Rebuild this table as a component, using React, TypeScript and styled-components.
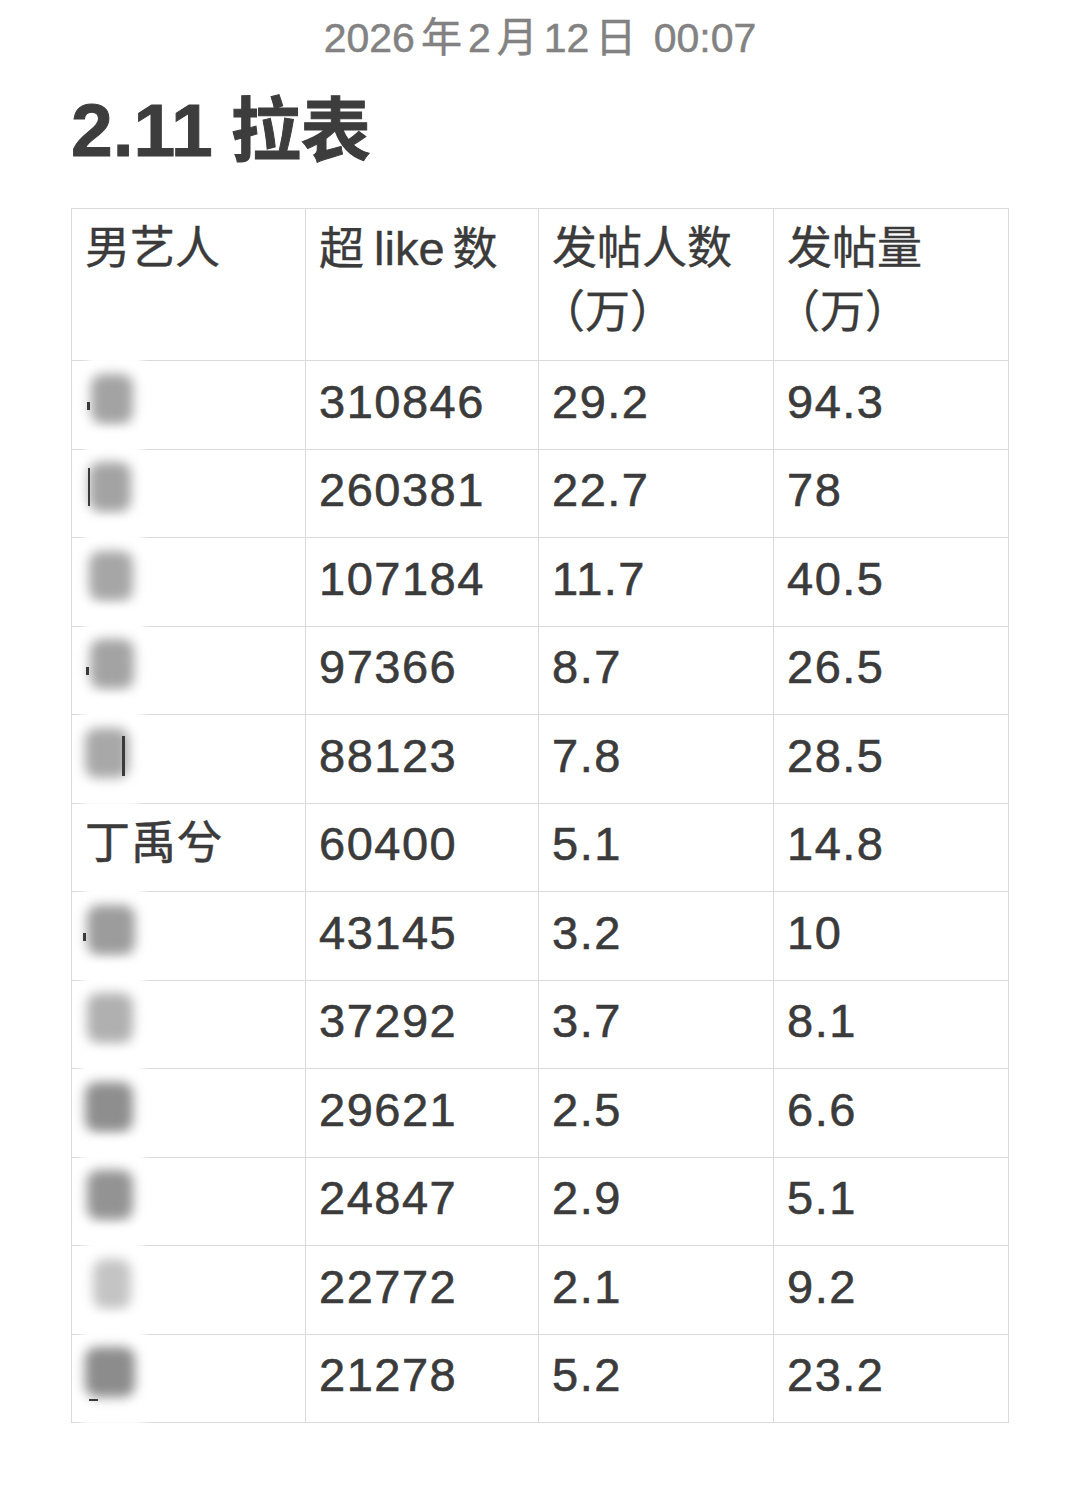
import React from 'react'
import styled, { createGlobalStyle } from 'styled-components'

const GlobalStyle = createGlobalStyle`
  html, body {
    margin: 0;
    background: #fff;
  }
  body {
    font-family: 'Liberation Sans', 'Noto Sans CJK SC', sans-serif;
    color: #3b3b3b;
  }
`

const Page = styled.div`
  width: 1080px;
  min-height: 1485px;
  padding: 14px 71px 0;
  box-sizing: border-box;
`

const Stamp = styled.div`
  text-align: center;
  font-size: 41px;
  line-height: 48px;
  color: #828282;
  -webkit-text-stroke: 0.5px #828282;
`

const Unit = styled.span`
  margin: 0 6px;
`

const Title = styled.h1`
  margin: 24px 0 0;
  font-size: 75px;
  line-height: 89px;
  font-weight: 700;
  color: #3d3d3d;
  -webkit-text-stroke: 1px #3d3d3d;
`

const TitleHan = styled.span`
  font-size: 70px;
  margin-left: 18px;
`

const Sheet = styled.table`
  margin-top: 31px;
  width: 937px;
  border-collapse: collapse;
  table-layout: fixed;
`

const Col = styled.col<{ $w: number }>`
  width: ${(p) => p.$w}px;
`

const HeadCell = styled.th`
  border: 1px solid #dadada;
  height: 152px;
  padding: 8px 13px 0;
  box-sizing: border-box;
  text-align: left;
  vertical-align: top;
  font-size: 45px;
  line-height: 64px;
  font-weight: 400;
  -webkit-text-stroke: 0.4px #3b3b3b;
`

const Latin = styled.span`
  font-size: 47px;
  margin: 0 8px 0 10px;
`

const Paren = styled.span`
  margin-left: -12px;
`

const Cell = styled.td<{ $han?: boolean }>`
  border: 1px solid #dadada;
  height: 88.5px;
  padding: 0 13px 6px;
  box-sizing: border-box;
  vertical-align: middle;
  font-size: ${(p) => (p.$han ? 45 : 47)}px;
  letter-spacing: ${(p) => (p.$han ? 1 : 1.5)}px;
  line-height: 56px;
  white-space: nowrap;
  -webkit-text-stroke: 0.6px #3b3b3b;
`

type Mark = 'left' | 'right' | 'tick' | 'dash'

const Smudge = styled.span<{ $w: number; $dx: number; $tone: string }>`
  position: relative;
  z-index: 1;
  display: block;
  width: ${(p) => p.$w}px;
  height: 54px;
  margin: 0 0 6px ${(p) => p.$dx}px;

  &::before {
    content: '';
    position: absolute;
    left: -3px;
    right: -9px;
    top: -28px;
    bottom: -28px;
    background: rgba(255, 255, 255, 0.96);
    filter: blur(4px);
  }

  &::after {
    content: '';
    position: absolute;
    inset: 2px 0;
    background: ${(p) => p.$tone};
    border-radius: 12px;
    filter: blur(6px);
  }
`

const Stroke = styled.span<{ $mark: Mark }>`
  position: absolute;
  z-index: 2;
  background: #3a3a3a;
  ${(p) =>
    p.$mark === 'left'
      ? 'left: -1px; top: 8px; width: 2px; height: 38px;'
      : p.$mark === 'right'
        ? 'right: 4px; top: 10px; width: 3px; height: 40px;'
        : p.$mark === 'tick'
          ? 'left: -4px; top: 30px; width: 3px; height: 8px;'
          : 'left: 4px; bottom: -2px; width: 9px; height: 2px;'}
`

interface BlurProps {
  w?: number
  dx?: number
  tone?: string
  mark?: Mark
}

const Blurred: React.FC<BlurProps> = ({ w = 44, dx = 4, tone = '#a3a3a3', mark }) => (
  <Smudge $w={w} $dx={dx} $tone={tone} aria-hidden="true">
    {mark && <Stroke $mark={mark} />}
  </Smudge>
)

interface Row {
  name?: string
  blur?: BlurProps
  likes: string
  posters: string
  posts: string
}

const rows: Row[] = [
  { blur: { mark: 'tick', dx: 6, w: 42 }, likes: '310846', posters: '29.2', posts: '94.3' },
  { blur: { mark: 'left', w: 42 }, likes: '260381', posters: '22.7', posts: '78' },
  { blur: { w: 44, tone: '#a6a6a6' }, likes: '107184', posters: '11.7', posts: '40.5' },
  { blur: { mark: 'tick', w: 44, dx: 5 }, likes: '97366', posters: '8.7', posts: '26.5' },
  { blur: { mark: 'right', w: 44, dx: 0, tone: '#a8a8a8' }, likes: '88123', posters: '7.8', posts: '28.5' },
  { name: '丁禹兮', likes: '60400', posters: '5.1', posts: '14.8' },
  { blur: { mark: 'tick', w: 48, dx: 2, tone: '#9c9c9c' }, likes: '43145', posters: '3.2', posts: '10' },
  { blur: { w: 46, dx: 2, tone: '#b0b0b0' }, likes: '37292', posters: '3.7', posts: '8.1' },
  { blur: { w: 48, dx: 0, tone: '#8e8e8e' }, likes: '29621', posters: '2.5', posts: '6.6' },
  { blur: { w: 46, dx: 2, tone: '#939393' }, likes: '24847', posters: '2.9', posts: '5.1' },
  { blur: { w: 38, dx: 8, tone: '#c4c4c4' }, likes: '22772', posters: '2.1', posts: '9.2' },
  { blur: { mark: 'dash', w: 50, dx: 0, tone: '#8c8c8c' }, likes: '21278', posters: '5.2', posts: '23.2' },
]

const App: React.FC = () => (
  <>
    <GlobalStyle />
    <Page>
      <Stamp>
        2026<Unit>年</Unit>2<Unit>月</Unit>12<Unit>日</Unit> 00:07
      </Stamp>
      <Title>
        2.11<TitleHan>拉表</TitleHan>
      </Title>
      <Sheet>
        <colgroup>
          <Col $w={234} />
          <Col $w={233} />
          <Col $w={235} />
          <Col $w={235} />
        </colgroup>
        <thead>
          <tr>
            <HeadCell>男艺人</HeadCell>
            <HeadCell>
              超<Latin>like</Latin>数
            </HeadCell>
            <HeadCell>
              发帖人数
              <br />
              <Paren>（万）</Paren>
            </HeadCell>
            <HeadCell>
              发帖量
              <br />
              <Paren>（万）</Paren>
            </HeadCell>
          </tr>
        </thead>
        <tbody>
          {rows.map((row) => (
            <tr key={row.likes}>
              <Cell $han={!!row.name}>{row.name ? row.name : <Blurred {...row.blur} />}</Cell>
              <Cell>{row.likes}</Cell>
              <Cell>{row.posters}</Cell>
              <Cell>{row.posts}</Cell>
            </tr>
          ))}
        </tbody>
      </Sheet>
    </Page>
  </>
)

export default App
